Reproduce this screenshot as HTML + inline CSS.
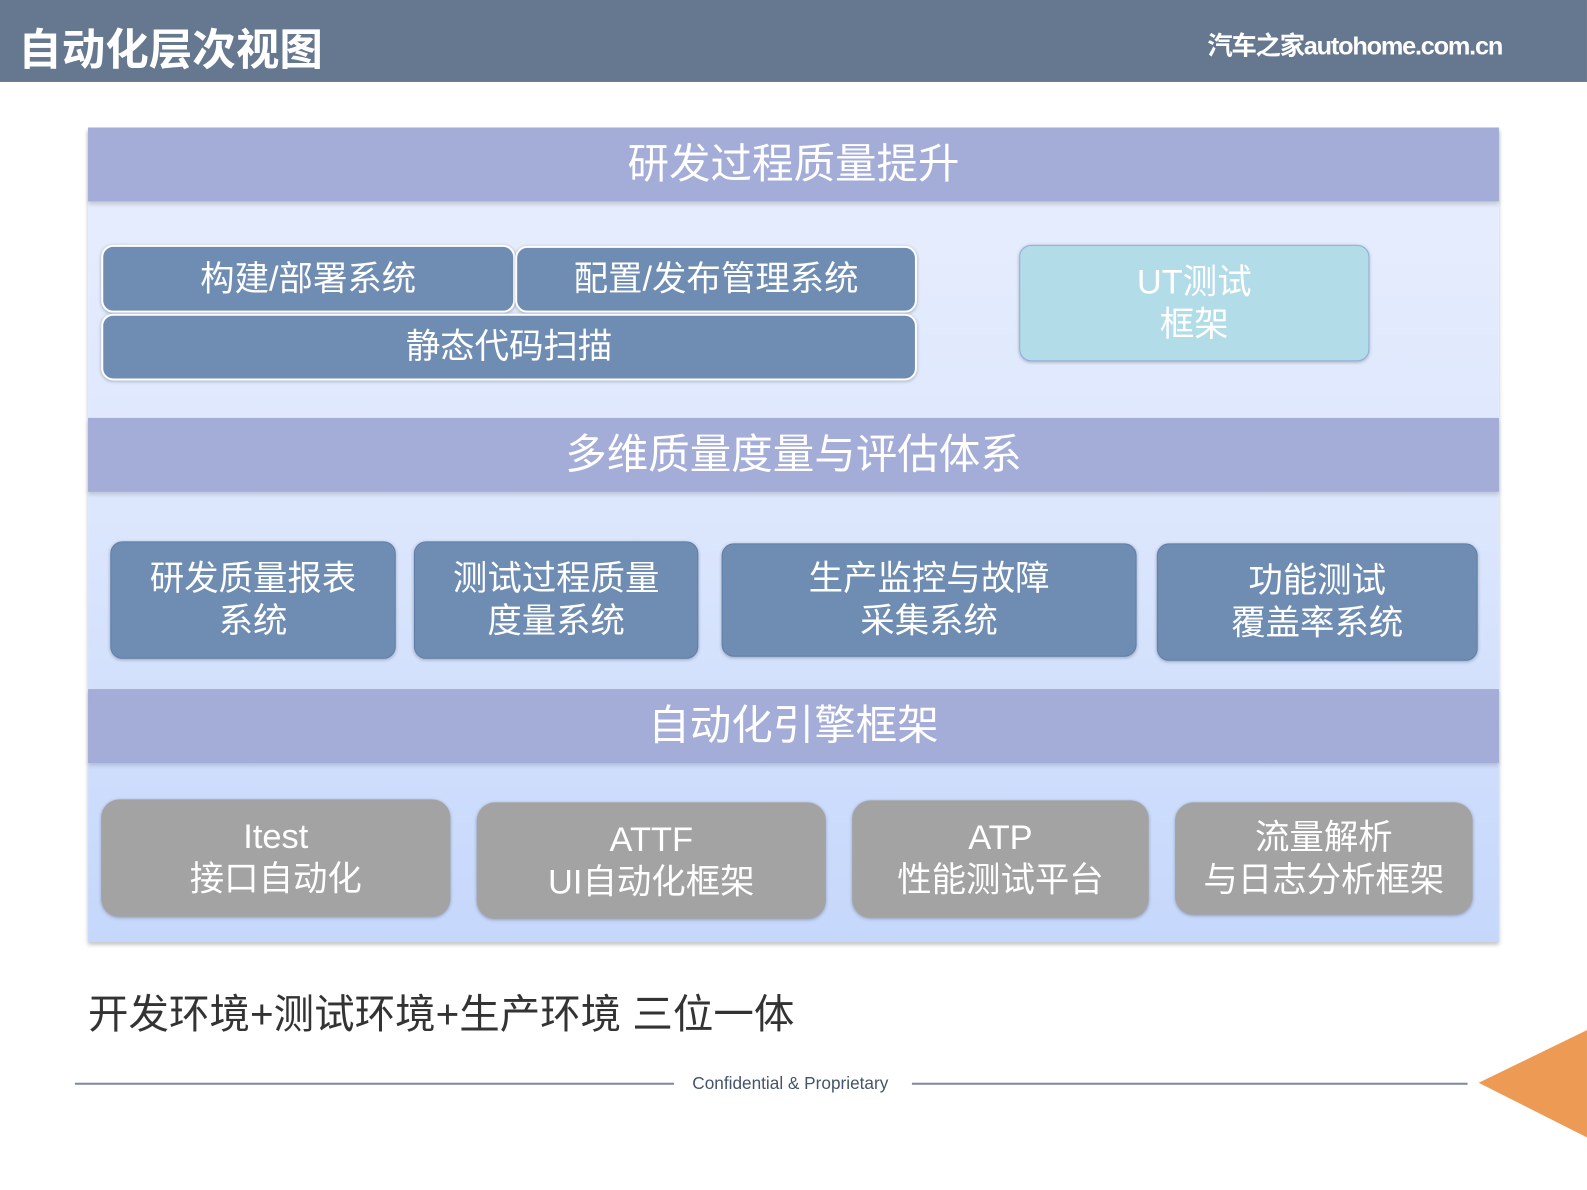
<!DOCTYPE html>
<html><head><meta charset="utf-8"><style>
*{margin:0;padding:0;box-sizing:border-box}
body{width:1587px;height:1190px;background:#fff;position:relative;overflow:hidden;font-family:"Liberation Sans","Noto Sans CJK SC",sans-serif}
#w{position:absolute;left:0;top:0;width:1568px;height:1176px;transform-origin:0 0;transform:scale(1.0121,1.0119)}
.hdr{position:absolute;left:0;top:0;width:1568px;height:81px;background:#66788f}
.t{position:absolute;color:#fff}
.panel{position:absolute;left:87px;top:126px;width:1394px;height:805px;background:linear-gradient(#e8eefd,#dbe6fd 50%,#c5d7fb);box-shadow:0 3px 4px rgba(0,0,0,.25)}
.band{position:absolute;left:87px;width:1394px;height:73px;background:#a4acd8;color:#fff;font-size:41px;text-align:center;line-height:72px;box-shadow:0 3px 4px rgba(0,0,0,.15)}
.b{position:absolute;background:#6f8db3;border:2px solid #fff;border-radius:12px;color:#fff;font-size:34px;text-align:center;display:flex;align-items:center;justify-content:center;line-height:42px;box-shadow:0 1px 3px rgba(0,0,0,.25)}
.g{background:#a3a3a3;border:none;border-radius:18px}
</style></head><body><div id="w">
<div class="hdr"></div>
<div class="t" style="left:18px;top:15px;font-size:43px;font-weight:bold">自动化层次视图</div>
<div class="t" style="left:1193px;top:26px;font-size:25px;font-weight:bold;letter-spacing:-1.2px">汽车之家<span>autohome.com.cn</span></div>
<div class="panel"></div>
<div class="band" style="top:126px">研发过程质量提升</div>
<div class="band" style="top:413px">多维质量度量与评估体系</div>
<div class="band" style="top:681px">自动化引擎框架</div>
<div class="b" style="left:100px;top:242px;width:409px;height:67px">构建/部署系统</div>
<div class="b" style="left:509px;top:243px;width:397px;height:66px">配置/发布管理系统</div>
<div class="b" style="left:100px;top:310px;width:806px;height:66px">静态代码扫描</div>
<div class="b" style="left:1007px;top:242px;width:346px;height:115px;background:#b3dce9;border:1.5px solid #8fb0d8">UT测试<br>框架</div>
<div class="b" style="left:109px;top:535px;width:282px;height:116px;border:1.5px solid #5f7ea8">研发质量报表<br>系统</div>
<div class="b" style="left:409px;top:535px;width:281px;height:116px;border:1.5px solid #5f7ea8">测试过程质量<br>度量系统</div>
<div class="b" style="left:713px;top:537px;width:410px;height:112px;border:1.5px solid #5f7ea8">生产监控与故障<br>采集系统</div>
<div class="b" style="left:1143px;top:537px;width:317px;height:116px;border:1.5px solid #5f7ea8">功能测试<br>覆盖率系统</div>
<div class="b g" style="left:100px;top:790px;width:345px;height:116px">Itest<br>接口自动化</div>
<div class="b g" style="left:471px;top:793px;width:345px;height:115px">ATTF<br>UI自动化框架</div>
<div class="b g" style="left:842px;top:791px;width:293px;height:116px">ATP<br>性能测试平台</div>
<div class="b g" style="left:1161px;top:793px;width:294px;height:111px">流量解析<br>与日志分析框架</div>
<div style="position:absolute;left:87px;top:970px;font-size:40px;color:#333">开发环境+测试环境+生产环境 三位一体</div>
<div style="position:absolute;left:74px;top:1070px;width:592px;height:2px;background:#7d8a9e"></div>
<div style="position:absolute;left:901px;top:1070px;width:549px;height:2px;background:#7d8a9e"></div>
<div style="position:absolute;left:684px;top:1061px;font-size:17px;color:#44546a">Confidential &amp; Proprietary</div>
<svg style="position:absolute;left:0;top:0" width="1568" height="1176"><polygon points="1461,1070 1568,1018 1568,1124" fill="#ec9a54"/></svg>
</div></body></html>
